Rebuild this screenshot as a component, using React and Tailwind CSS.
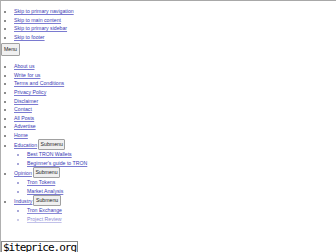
import React from 'react';

const skipLinks = ['Skip to primary navigation', 'Skip to main content', 'Skip to primary sidebar', 'Skip to footer'];

const topLinks = ['About us', 'Write for us', 'Terms and Conditions', 'Privacy Policy', 'Disclaimer', 'Contact', 'All Posts', 'Advertise', 'Home'];

const groups = [
  { label: 'Education', items: ['Best TRON Wallets', "Beginner's guide to TRON"] },
  { label: 'Opinion', items: ['Tron Tokens', 'Market Analysis'] },
  { label: 'Industry', items: ['Tron Exchange', 'Project Review'] },
];

const Link = ({ children }) => (
  <a href="#" className="text-[#3b3bb6] underline decoration-[0.5px] decoration-[#7a7ad0]">{children}</a>
);

const SubButton = ({ children, className = '' }) => (
  <button className={`bg-[#f0f0f0] border border-[#a0a0a0] rounded-[1px] px-[1.5px] text-[#222] leading-none ${className}`}>
    {children}
  </button>
);

export default function App() {
  return (
    <div className="relative w-[336px] h-[252px] overflow-hidden bg-white border-t border-t-[#a8a8a8] border-l border-l-[#b0b0b0] font-['Liberation_Sans',Arial,sans-serif] text-[5.2px]">
      <ul className="list-disc pl-[13px] pt-[6px] leading-[8.6px] marker:text-[#666]">
        {skipLinks.map((s) => (
          <li key={s}><Link>{s}</Link></li>
        ))}
      </ul>

      <div className="mt-[2px]">
        <SubButton className="h-[13px] px-[2px] text-[5.2px]">Menu</SubButton>
      </div>

      <ul className="list-disc pl-[13px] pt-[6px] leading-[8.55px] marker:text-[#666]">
        {topLinks.map((s) => (
          <li key={s}><Link>{s}</Link></li>
        ))}
        {groups.map((g) => (
          <li key={g.label}>
            <div className="h-[11px] flex items-center gap-[1px]">
              <Link>{g.label}</Link>
              <SubButton className="h-[11px] text-[5.2px]">Submenu</SubButton>
            </div>
            <ul className="list-[square] pl-[13px] marker:text-[#a8a8d8]">
              {g.items.map((i) => (
                <li key={i}><Link>{i}</Link></li>
              ))}
            </ul>
          </li>
        ))}
      </ul>

      <div className="absolute left-0 right-0 top-[210px] bottom-0 bg-gradient-to-b from-white/0 via-white/95 to-white" />

      <div className="absolute left-0 top-[240px] h-[12px] px-[1px] bg-white border border-[#8a8a8a] flex items-center font-['DejaVu_Sans_Mono',monospace] text-[11px] tracking-[-1px] text-black leading-none">
        $iteprice.org
      </div>
    </div>
  );
}
